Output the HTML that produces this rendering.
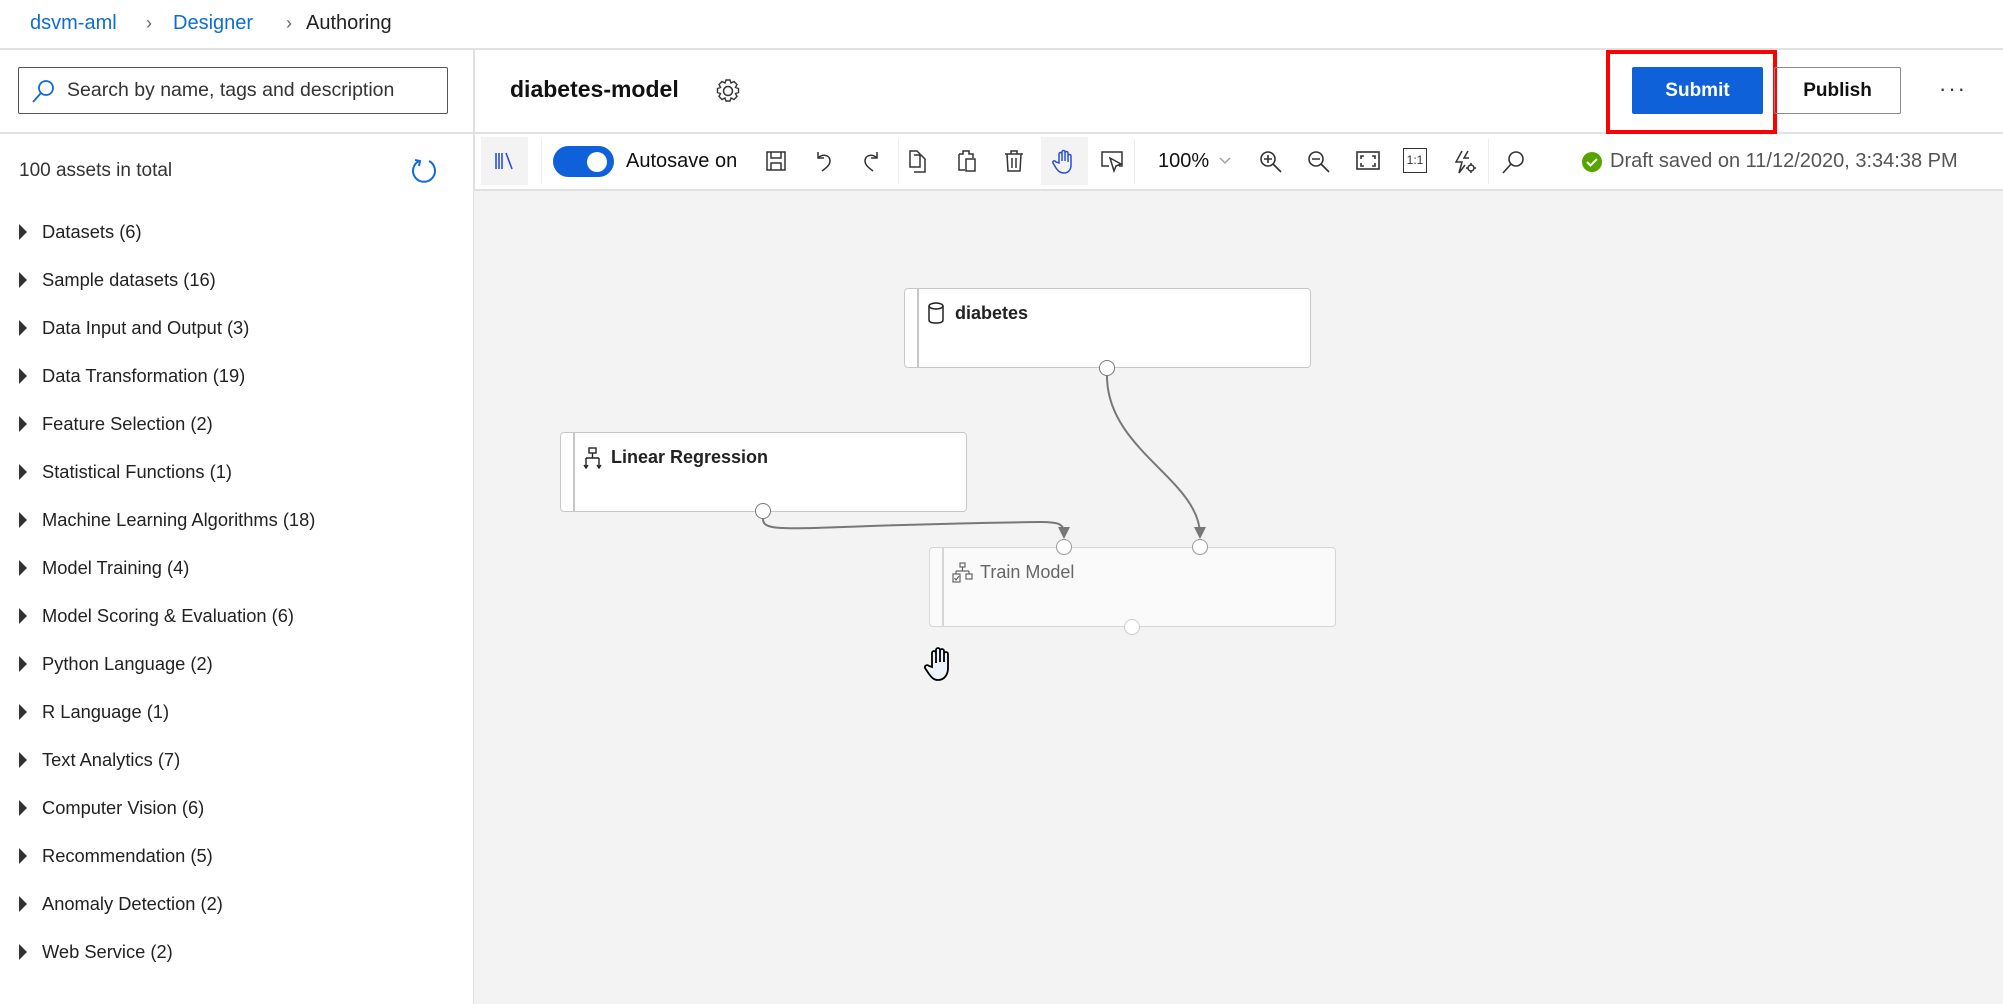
<!DOCTYPE html>
<html><head><meta charset="utf-8">
<style>
*{margin:0;padding:0;box-sizing:border-box}
body{width:2003px;height:1004px;overflow:hidden;background:#fff;font-family:"Liberation Sans",sans-serif;color:#222;position:relative}
.a{position:absolute}
.bc{top:10px;font-size:20px;line-height:26px}
.hl{height:2px;background:#e1e1e1}
.cat{left:0;width:470px;height:48px;font-size:18.3px;line-height:48px}
.cat .t{position:absolute;left:19px;top:16px;width:0;height:0;border-top:8px solid transparent;border-bottom:8px solid transparent;border-left:8px solid #323130}
.cat span{position:absolute;left:42px}
.ic{position:absolute;top:149px}
.sep{position:absolute;top:139px;width:1px;height:45px;background:#ececec}
.node{position:absolute;background:#fff;border:1.5px solid #c8c8c8;border-radius:4px;height:80px;width:407px}
.node .bar{position:absolute;left:12px;top:0;bottom:0;width:1.5px;background:#c8c8c8}
.node .lbl{position:absolute;left:50px;top:14px;font-size:18px;font-weight:bold;color:#222}
.port{position:absolute;width:16px;height:16px;border-radius:50%;border:1.5px solid #777;background:#fff;margin:-8px 0 0 -8px}
</style></head><body>
<div class="a bc" style="left:30px;color:#0f6cd6">dsvm-aml</div>
<div class="a bc" style="left:146px;color:#666;font-size:18px">&#8250;</div>
<div class="a bc" style="left:173px;color:#0f6cd6">Designer</div>
<div class="a bc" style="left:286px;color:#666;font-size:18px">&#8250;</div>
<div class="a bc" style="left:306px;color:#222">Authoring</div>
<div class="a hl" style="left:0;top:48px;width:2003px"></div>
<div class="a hl" style="left:0;top:132px;width:2003px"></div>
<div class="a" style="left:473px;top:48px;width:1.5px;height:956px;background:#e1e1e1"></div>

<div class="a" style="left:18px;top:67px;width:430px;height:47px;border:1.5px solid #555;border-radius:2px"></div>
<svg class="a" style="left:30px;top:78px" width="26" height="26" viewBox="0 0 26 26"><circle cx="16" cy="10" r="7" fill="none" stroke="#0f6cd6" stroke-width="1.8"/><path d="M11 15 L3 24" stroke="#0f6cd6" stroke-width="1.8"/></svg>
<div class="a" style="left:67px;top:79px;font-size:19.5px;color:#333">Search by name, tags and description</div>

<div class="a" style="left:19px;top:160px;font-size:19px;color:#333">100 assets in total</div>
<svg class="a" style="left:409px;top:156px" width="30" height="30" viewBox="0 0 30 30"><path d="M10 5 A11 11 0 1 0 20 5" fill="none" stroke="#0f6cd6" stroke-width="2"/><path d="M6 4 L11 5 L10 10" fill="none" stroke="#0f6cd6" stroke-width="2"/></svg>

<div class="a cat" style="top:208px"><i class="t"></i><span>Datasets (6)</span></div>
<div class="a cat" style="top:256px"><i class="t"></i><span>Sample datasets (16)</span></div>
<div class="a cat" style="top:304px"><i class="t"></i><span>Data Input and Output (3)</span></div>
<div class="a cat" style="top:352px"><i class="t"></i><span>Data Transformation (19)</span></div>
<div class="a cat" style="top:400px"><i class="t"></i><span>Feature Selection (2)</span></div>
<div class="a cat" style="top:448px"><i class="t"></i><span>Statistical Functions (1)</span></div>
<div class="a cat" style="top:496px"><i class="t"></i><span>Machine Learning Algorithms (18)</span></div>
<div class="a cat" style="top:544px"><i class="t"></i><span>Model Training (4)</span></div>
<div class="a cat" style="top:592px"><i class="t"></i><span>Model Scoring &amp; Evaluation (6)</span></div>
<div class="a cat" style="top:640px"><i class="t"></i><span>Python Language (2)</span></div>
<div class="a cat" style="top:688px"><i class="t"></i><span>R Language (1)</span></div>
<div class="a cat" style="top:736px"><i class="t"></i><span>Text Analytics (7)</span></div>
<div class="a cat" style="top:784px"><i class="t"></i><span>Computer Vision (6)</span></div>
<div class="a cat" style="top:832px"><i class="t"></i><span>Recommendation (5)</span></div>
<div class="a cat" style="top:880px"><i class="t"></i><span>Anomaly Detection (2)</span></div>
<div class="a cat" style="top:928px"><i class="t"></i><span>Web Service (2)</span></div>

<div class="a" style="left:510px;top:76px;font-size:23px;font-weight:bold;color:#111">diabetes-model</div>
<svg class="a" style="left:714px;top:77px" width="28" height="28" viewBox="0 0 28 28"><circle cx="14" cy="14" r="4.5" fill="none" stroke="#333" stroke-width="1.5"/><path d="M12 3h4l1 3 3-1.5 3 3-1.5 3 3 1v4l-3 1 1.5 3-3 3-3-1.5-1 3h-4l-1-3-3 1.5-3-3 1.5-3-3-1v-4l3-1-1.5-3 3-3 3 1.5z" fill="none" stroke="#333" stroke-width="1.4"/></svg>
<div class="a" style="left:1606px;top:50px;width:171px;height:84px;border:4px solid #f00"></div>
<div class="a" style="left:1632px;top:67px;width:131px;height:47px;background:#0f61d9;border-radius:2px;color:#fff;font-weight:bold;font-size:19px;text-align:center;line-height:47px">Submit</div>
<div class="a" style="left:1774px;top:67px;width:127px;height:47px;border:1.5px solid #8a8a8a;border-radius:2px;color:#111;font-weight:bold;font-size:19px;text-align:center;line-height:46px">Publish</div>
<div class="a" style="left:1939px;top:76px;font-size:22px;color:#333;letter-spacing:2px">&middot;&middot;&middot;</div>

<div class="a" style="left:481px;top:137px;width:47px;height:48px;background:#f3f3f3"></div>
<svg class="ic" style="left:492px" width="24" height="24" viewBox="0 0 24 24" fill="none" stroke="#2a4fd6" stroke-width="1.6"><path d="M4 4v16M7 4v16M10 4v16M14 4l6 16"/></svg>
<div class="sep" style="left:541px"></div>
<div class="a" style="left:553px;top:146px;width:61px;height:31px;background:#0f61d9;border-radius:16px"></div>
<div class="a" style="left:587px;top:152px;width:20px;height:20px;background:#fff;border-radius:50%"></div>
<div class="a" style="left:626px;top:150px;font-size:20px;color:#111">Autosave on</div>
<svg class="ic" style="left:764px" width="24" height="24" viewBox="0 0 24 24" fill="none" stroke="#333" stroke-width="1.5"><rect x="3" y="3" width="18" height="18"/><path d="M7 3v6h10V3M7 21v-7h10v7"/></svg>
<svg class="ic" style="left:812px" width="24" height="24" viewBox="0 0 24 24" fill="none" stroke="#333" stroke-width="1.5"><path d="M6 3v6h6M6 9c3-4 12-4 12 3c0 4-4 7-8 10"/></svg>
<svg class="ic" style="left:859px" width="24" height="24" viewBox="0 0 24 24" fill="none" stroke="#333" stroke-width="1.5"><path d="M18 3v6h-6M18 9c-3-4-12-4-12 3c0 4 4 7 8 10"/></svg>
<div class="sep" style="left:898px"></div>
<svg class="ic" style="left:906px" width="24" height="24" viewBox="0 0 24 24" fill="none" stroke="#333" stroke-width="1.5"><path d="M4 2h7l3 3v13H4z M8 6h7l4 4v13H8"/></svg>
<svg class="ic" style="left:955px" width="24" height="24" viewBox="0 0 24 24" fill="none" stroke="#333" stroke-width="1.5"><path d="M4 5h4V2h6v3h4v4M4 5v16h6M11 10h9v12h-9z"/></svg>
<svg class="ic" style="left:1002px" width="24" height="24" viewBox="0 0 24 24" fill="none" stroke="#333" stroke-width="1.5"><path d="M3 5h18M9 5V2h6v3M5 5l1 17h12l1-17M10 9v10M14 9v10"/></svg>
<div class="a" style="left:1041px;top:137px;width:47px;height:48px;background:#f3f3f3"></div>
<svg class="ic" style="left:1052px" width="24" height="26" viewBox="0 0 24 26" fill="none" stroke="#2a4fd6" stroke-width="1.5"><path d="M7 14V5a1.5 1.5 0 0 1 3 0v7V3a1.5 1.5 0 0 1 3 0v9V4a1.5 1.5 0 0 1 3 0v9V7a1.5 1.5 0 0 1 3 0v9c0 5-3 8-7 8s-6-2-8-5l-3-5c-1-2 2-3 3-1z"/></svg>
<svg class="ic" style="left:1099px" width="26" height="24" viewBox="0 0 26 24" fill="none" stroke="#333" stroke-width="1.5"><path d="M10 17H3V3h20v14h-3M11 9l4 13 2-5 5-2z"/></svg>
<div class="sep" style="left:1134px"></div>
<div class="a" style="left:1158px;top:150px;font-size:20px;color:#111">100%</div>
<svg class="a" style="left:1218px;top:156px" width="14" height="10" viewBox="0 0 14 10"><path d="M2 2l5 5 5-5" fill="none" stroke="#999" stroke-width="1.3"/></svg>
<svg class="ic" style="left:1258px" width="26" height="26" viewBox="0 0 26 26" fill="none" stroke="#333" stroke-width="1.6"><circle cx="10" cy="10" r="7"/><path d="M15 15l8 8M10 6v8M6 10h8"/></svg>
<svg class="ic" style="left:1306px" width="26" height="26" viewBox="0 0 26 26" fill="none" stroke="#333" stroke-width="1.6"><circle cx="10" cy="10" r="7"/><path d="M15 15l8 8M6 10h8"/></svg>
<svg class="ic" style="left:1355px" width="26" height="24" viewBox="0 0 26 24" fill="none" stroke="#333" stroke-width="1.6"><rect x="2" y="3" width="22" height="17"/><path d="M6 10V7h3M17 7h3v3M20 14v3h-3M9 17H6v-3"/></svg>
<div class="a" style="left:1403px;top:148px;width:24px;height:25px;border:1.6px solid #333;font-size:12px;line-height:22px;text-align:center;color:#333">1:1</div>
<svg class="ic" style="left:1452px" width="26" height="26" viewBox="0 0 26 26" fill="none" stroke="#333" stroke-width="1.5"><path d="M10 2L4 13h6l-3 11 6-8M16 2l-4 7h5"/><circle cx="19" cy="19" r="3"/><path d="M19 14v2M19 22v2M14 19h2M22 19h2"/></svg>
<div class="sep" style="left:1488px"></div>
<svg class="ic" style="left:1500px" width="26" height="26" viewBox="0 0 26 26" fill="none" stroke="#333" stroke-width="1.6"><circle cx="16" cy="10" r="7"/><path d="M11 15l-8 9"/></svg>
<svg class="a" style="left:1581px;top:151px" width="22" height="22" viewBox="0 0 22 22"><circle cx="11" cy="11" r="10" fill="#57a300"/><path d="M6 11l3.5 3.5L16 8" fill="none" stroke="#fff" stroke-width="2"/></svg>
<div class="a" style="left:1610px;top:150px;font-size:20px;color:#555">Draft saved on 11/12/2020, 3:34:38 PM</div>
<div class="a hl" style="left:474px;top:189px;width:1529px"></div>

<div class="a" style="left:474px;top:191px;width:1529px;height:813px;background:#f3f3f3"></div>
<svg class="a" style="left:0;top:0" width="2003" height="1004">
<path d="M1107 376 C1107 450 1200 480 1200 535" fill="none" stroke="#777" stroke-width="2"/>
<path d="M1194 527 L1200 539 L1206 527z" fill="#777"/>
<path d="M763 519 C763 536 800 525 1040 522 C1060 522 1064 524 1064 535" fill="none" stroke="#777" stroke-width="2"/>
<path d="M1058 527 L1064 539 L1070 527z" fill="#777"/>
</svg>
<div class="node" style="left:904px;top:288px"><div class="bar"></div>
<svg class="a" style="left:22px;top:13px" width="18" height="22" viewBox="0 0 18 22" fill="none" stroke="#222" stroke-width="1.5"><ellipse cx="9" cy="4" rx="7" ry="3"/><path d="M2 4v14c0 2 3 3 7 3s7-1 7-3V4"/></svg>
<div class="lbl" style="left:50px">diabetes</div></div>
<div class="node" style="left:560px;top:432px"><div class="bar"></div>
<svg class="a" style="left:22px;top:14px" width="20" height="22" viewBox="0 0 20 22" fill="none" stroke="#222" stroke-width="1.4"><rect x="6" y="1" width="7" height="5"/><path d="M9.5 6v5M3 11h13M3 11v9M16 11v9M1 18l2 3 2-3M14 18l2 3 2-3"/></svg>
<div class="lbl">Linear Regression</div></div>
<div class="node" style="left:929px;top:547px;background:#fafafa;border-color:#d6d6d6"><div class="bar" style="background:#d6d6d6"></div>
<svg class="a" style="left:22px;top:14px" width="22" height="22" viewBox="0 0 22 22" fill="none" stroke="#666" stroke-width="1.2"><rect x="8" y="1" width="5" height="4"/><path d="M10.5 5v4M4 9h13M4 9v3M17 9v3"/><rect x="1" y="12" width="7" height="8"/><rect x="14" y="12" width="6" height="5"/><path d="M2.5 16l1.5 2 3-4"/></svg>
<div class="lbl" style="font-weight:normal;color:#666">Train Model</div></div>
<div class="port" style="left:1107px;top:368px"></div>
<div class="port" style="left:763px;top:511px"></div>
<div class="port" style="left:1064px;top:547px;border-color:#999"></div>
<div class="port" style="left:1200px;top:547px;border-color:#999"></div>
<div class="port" style="left:1132px;top:627px;border-color:#ccc"></div>
<svg class="a" style="left:922px;top:645px" width="40" height="40" viewBox="0 0 40 40"><path d="M10 22V8a2 2 0 0 1 4 0v10V5a2 2 0 0 1 4 0v12V6a2 2 0 0 1 4 0v11V9a2 2 0 0 1 4 0v14c0 7-4 12-10 12c-4 0-6-2-9-6l-4-6c-1-2 2-4 4-2z" fill="#eef4ff" stroke="#000" stroke-width="1.8"/></svg>
</body></html>
